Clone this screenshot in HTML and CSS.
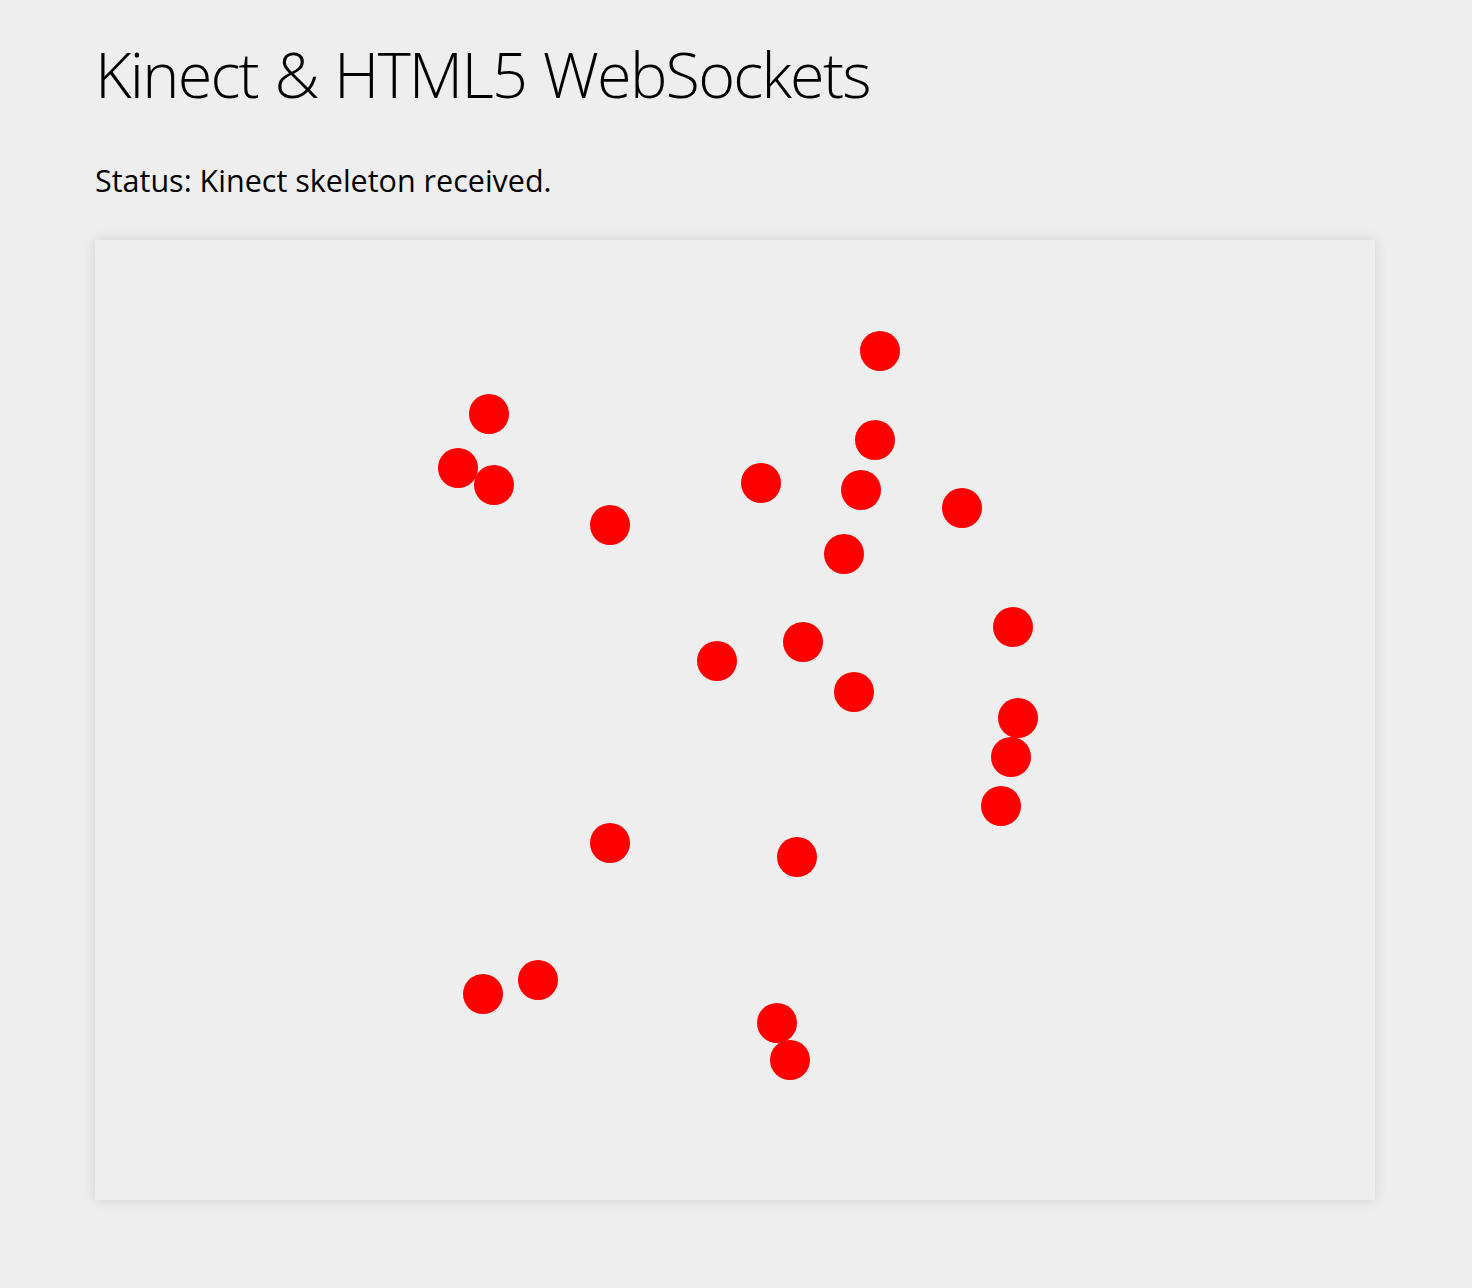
FILE: index.html
```html
<!DOCTYPE html>
<html>
<head>
<meta charset="utf-8">
<title>Kinect &amp; HTML5 WebSockets</title>
<link rel="stylesheet" href="styles.css">
</head>
<body>
<div class="page">
  <h1 class="title">Kinect &amp; HTML5 WebSockets</h1>
  <p class="status">Status: Kinect skeleton received.</p>
  <div class="board">
    <svg class="skeleton" width="1280" height="960" viewBox="0 0 1280 960">
      <g fill="#ff0000">
        <circle cx="785" cy="111" r="20"/>
        <circle cx="394" cy="174" r="20"/>
        <circle cx="780" cy="200" r="20"/>
        <circle cx="363" cy="228" r="20"/>
        <circle cx="399" cy="245" r="20"/>
        <circle cx="666" cy="243" r="20"/>
        <circle cx="766" cy="250" r="20"/>
        <circle cx="867" cy="268" r="20"/>
        <circle cx="515" cy="285" r="20"/>
        <circle cx="749" cy="314" r="20"/>
        <circle cx="918" cy="387" r="20"/>
        <circle cx="708" cy="402" r="20"/>
        <circle cx="622" cy="421" r="20"/>
        <circle cx="759" cy="452" r="20"/>
        <circle cx="923" cy="478" r="20"/>
        <circle cx="916" cy="517" r="20"/>
        <circle cx="906" cy="566" r="20"/>
        <circle cx="515" cy="603" r="20"/>
        <circle cx="702" cy="617" r="20"/>
        <circle cx="443" cy="740" r="20"/>
        <circle cx="388" cy="754" r="20"/>
        <circle cx="682" cy="783" r="20"/>
        <circle cx="695" cy="820" r="20"/>
      </g>
    </svg>
  </div>
</div>
</body>
</html>
```
FILE: styles.css
```css
html, body {
  margin: 0;
  padding: 0;
  background: #eeeeee;
}
body {
  font-family: "Open Sans", "Noto Sans", sans-serif;
  color: #000;
}
.page {
  padding: 30px 0 88px 95px;
}
.title {
  margin: 0;
  font-weight: 300;
  font-size: 63px;
  line-height: 88px;
  letter-spacing: -1.8px;
  word-spacing: 2px;
}
.status {
  margin: 42px 0 0 0;
  font-size: 30.5px;
  line-height: 40px;
  font-weight: 400;
}
.board {
  margin-top: 40px;
  width: 1280px;
  height: 960px;
  background: #eeeeee;
  box-shadow: 0 0 12px rgba(0, 0, 0, 0.12);
}
.skeleton {
  display: block;
}
```
